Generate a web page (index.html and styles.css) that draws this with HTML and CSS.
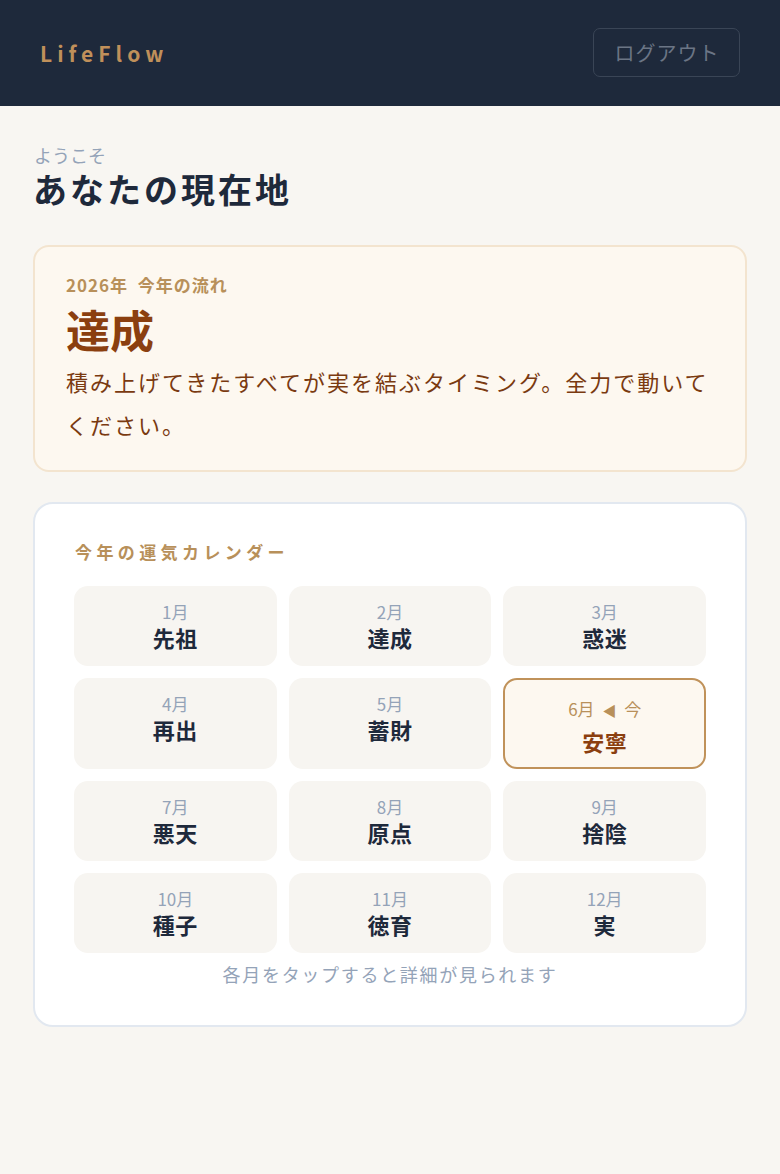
FILE: index.html
```html
<!DOCTYPE html>
<html lang="ja">
<head>
<meta charset="utf-8">
<title>LifeFlow</title>
<link rel="stylesheet" href="styles.css">
</head>
<body>
<header class="topbar">
  <div class="logo">LifeFlow</div>
  <button class="logout">ログアウト</button>
</header>
<main class="main">
  <div class="welcome">ようこそ</div>
  <h1 class="title">あなたの現在地</h1>

  <section class="year-card">
    <div class="year-label">2026年&nbsp;&nbsp;今年の流れ</div>
    <div class="year-name">達成</div>
    <p class="year-desc">積み上げてきたすべてが実を結ぶタイミング。全力で動いてください。</p>
  </section>

  <section class="cal-card">
    <div class="cal-title">今年の運気カレンダー</div>
    <div class="cal-grid">
      <div class="cell"><div class="m">1月</div><div class="n">先祖</div></div>
      <div class="cell"><div class="m">2月</div><div class="n">達成</div></div>
      <div class="cell"><div class="m">3月</div><div class="n">惑迷</div></div>
      <div class="cell"><div class="m">4月</div><div class="n">再出</div></div>
      <div class="cell"><div class="m">5月</div><div class="n">蓄財</div></div>
      <div class="cell current"><div class="m">6月 <span class="arrow">◀</span> 今</div><div class="n">安寧</div></div>
      <div class="cell"><div class="m">7月</div><div class="n">悪天</div></div>
      <div class="cell"><div class="m">8月</div><div class="n">原点</div></div>
      <div class="cell"><div class="m">9月</div><div class="n">捨陰</div></div>
      <div class="cell"><div class="m">10月</div><div class="n">種子</div></div>
      <div class="cell"><div class="m">11月</div><div class="n">徳育</div></div>
      <div class="cell"><div class="m">12月</div><div class="n">実</div></div>
    </div>
    <div class="cal-note">各月をタップすると詳細が見られます</div>
  </section>
</main>
</body>
</html>
```

FILE: styles.css
```css
* { box-sizing: border-box; }
html, body { margin: 0; padding: 0; }
body {
  background: #f8f6f2;
  font-family: "Noto Sans CJK JP", "Noto Sans", sans-serif;
  color: #1e293b;
  min-height: 1174px;
}
.topbar {
  height: 106px;
  background: #1e293b;
  display: flex;
  align-items: center;
  justify-content: space-between;
  padding: 0 40px 0 40px;
}
.logo {
  color: #c0905a;
  font-size: 21px;
  font-weight: 700;
  letter-spacing: 5px;
  line-height: 1;
}
.logout {
  width: 147px;
  height: 49px;
  margin-top: -1px;
  background: transparent;
  border: 1.5px solid #3a4556;
  border-radius: 7px;
  color: #6b7585;
  font-family: inherit;
  font-size: 20px;
  padding: 0 0 0 1px;
  letter-spacing: 1px;
}
.main {
  padding: 39px 33px 0 33px;
}
.welcome {
  font-size: 18px;
  line-height: 20px;
  color: #94a3b8;
  padding-left: 1px;
}
.title {
  margin: 3px 0 0 0;
  font-size: 34px;
  line-height: 42px;
  font-weight: 700;
  letter-spacing: 3px;
  color: #1e293b;
}
.year-card {
  margin-top: 35px;
  background: #fdf8f0;
  border: 2px solid #f3e4cf;
  border-radius: 16px;
  padding: 26px 20px 24px 31px;
}
.year-label {
  color: #b8905a;
  font-size: 17px;
  font-weight: 700;
  line-height: 24px;
  letter-spacing: 1px;
}
.year-name {
  color: #8b3f0f;
  font-size: 44px;
  font-weight: 700;
  line-height: 54px;
  margin-top: 5px;
}
.year-desc {
  margin: 4px 0 0 0;
  color: #7a3a10;
  font-size: 22px;
  line-height: 43px;
  letter-spacing: 2px;
}
.cal-card {
  margin-top: 30px;
  background: #ffffff;
  border: 2px solid #e2e8f0;
  border-radius: 20px;
  padding: 36px 39px 38px 39px;
}
.cal-title {
  color: #b8905a;
  font-size: 17px;
  font-weight: 700;
  line-height: 24px;
  letter-spacing: 4.4px;
  padding-left: 1px;
}
.cal-grid {
  margin-top: 22px;
  display: grid;
  grid-template-columns: repeat(3, 1fr);
  gap: 12px 12px;
}
.cell {
  background: #f7f5f1;
  border-radius: 14px;
  padding: 15px 8px 15px 8px;
  text-align: center;
  min-height: 80px;
}
.cell .m {
  font-size: 17px;
  line-height: 22px;
  color: #94a3b8;
}
.cell .n {
  font-size: 22px;
  line-height: 28px;
  font-weight: 700;
  letter-spacing: 0.5px;
  color: #1e293b;
}
.cell.current {
  background: #fdf8f0;
  border: 2px solid #c0925a;
  padding: 18px 8px 12px 8px;
}
.cell.current .m {
  color: #b8905a;
  margin-bottom: 6px;
  word-spacing: 4px;
}
.cell.current .arrow {
  font-size: 14px;
}
.cell.current .n {
  color: #8b3f0f;
}
.cal-note {
  margin-top: 8px;
  text-align: center;
  color: #94a3b8;
  font-size: 18px;
  line-height: 26px;
  letter-spacing: 1.7px;
}
```
